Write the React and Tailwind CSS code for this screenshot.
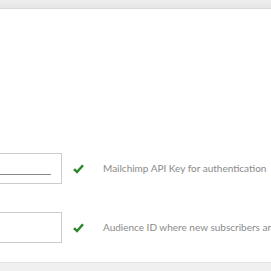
export default function App() {
  const rows = [
    { text: "Mailchimp API Key for authentication", underline: true },
    { text: "Audience ID where new subscribers are added", underline: false },
  ];
  return (
    <div className="w-[271px] h-[271px] overflow-hidden bg-white flex flex-col" style={{ fontFamily: 'Lato, "Noto Sans", sans-serif' }}>
      <div className="h-[9px] shrink-0 bg-gradient-to-b from-[#efefef] to-[#e6e6e6] border-b border-[#d9d9d9]" />
      <div className="flex-1 flex flex-col justify-end pb-[19px] gap-[28px]">
        {rows.map((r, i) => (
          <div key={i} className="flex items-center h-[31px] -ml-[60px]">
            <div className="w-[122px] h-[31px] shrink-0 border border-[#cccccc] bg-white relative">
              {r.underline && <div className="absolute left-0 right-[10px] top-[20px] h-px bg-[#8a8a8a]" />}
            </div>
            <svg className="ml-[11px] shrink-0" width="11" height="10" viewBox="0 0 11 10">
              <path d="M1 5.2 L4 8 L10 1.2" fill="none" stroke="#2a862a" strokeWidth="2.4" />
            </svg>
            <span className="ml-[19px] whitespace-nowrap text-[10px] text-[#8a8a8a]">{r.text}</span>
          </div>
        ))}
      </div>
      <div className="h-[9px] shrink-0 bg-[#f0f0f0] border-t border-[#e2e2e2]" />
    </div>
  );
}
